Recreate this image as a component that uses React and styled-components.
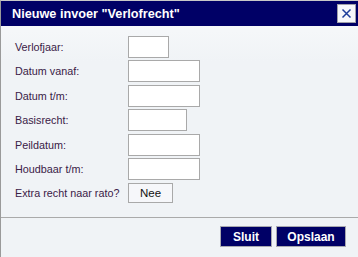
import React from "react";
import styled, { createGlobalStyle } from "styled-components";

const Global = createGlobalStyle`
  html, body {
    margin: 0;
    padding: 0;
    background: #f0f3f6;
  }
  * {
    box-sizing: border-box;
  }
`;

const Window = styled.div`
  width: 358px;
  height: 257px;
  display: flex;
  flex-direction: column;
  border-left: 1px solid #9a9a9a;
  border-top: 1px solid #c8c8c8;
  background: linear-gradient(#fafbfc 0px, #f0f3f6 60px, #f0f3f6 100%);
  font-family: "Liberation Sans", Arial, sans-serif;
  overflow: hidden;
`;

const TitleBar = styled.div`
  height: 25px;
  flex: none;
  background: #000066;
  display: flex;
  align-items: center;
  justify-content: space-between;
  padding: 0 2px 0 11px;
`;

const Title = styled.span`
  color: #ffffff;
  font-weight: bold;
  font-size: 12.7px;
`;

const CloseButton = styled.button`
  width: 19px;
  height: 19px;
  padding: 0;
  margin: 0;
  border: 1px solid #a0a0a8;
  background: #f6f7fb;
  display: flex;
  align-items: center;
  justify-content: center;
  cursor: pointer;
`;

const Body = styled.div`
  flex: 1;
  padding: 10px 0 0 14px;
  display: flex;
  flex-direction: column;
  gap: 2.4px;
`;

const Row = styled.div`
  display: flex;
  align-items: center;
  height: 22px;
`;

const Label = styled.label`
  width: 113px;
  flex: none;
  font-size: 10.8px;
  color: #3a2046;
`;

const Input = styled.input`
  width: ${(p) => p.$w}px;
  height: 22px;
  border: 1px solid #a9a9a9;
  background: #ffffff;
  margin: 0;
  padding: 0 3px;
  font-family: inherit;
  font-size: 11px;
  outline: none;
`;

const Toggle = styled.button`
  width: 45px;
  height: 20px;
  border: 1px solid #a9a9a9;
  background: #f6f7fa;
  color: #111111;
  font-family: inherit;
  font-size: 11.5px;
  padding: 0;
  margin: 0;
`;

const Footer = styled.div`
  flex: none;
  border-top: 1px solid #aaaaaa;
  height: 40px;
  display: flex;
  justify-content: flex-end;
  align-items: flex-start;
  padding: 8px 12px 0 0;
  gap: 4px;
`;

const Action = styled.button`
  width: ${(p) => p.$w}px;
  height: 21px;
  border: 1px solid #a8a8b0;
  background: #000066;
  color: #ffffff;
  font-family: inherit;
  font-weight: bold;
  font-size: 12px;
  padding: 0;
  margin: 0;
  cursor: pointer;
`;

const fields = [
  { label: "Verlofjaar:", w: 41 },
  { label: "Datum vanaf:", w: 72 },
  { label: "Datum t/m:", w: 72 },
  { label: "Basisrecht:", w: 59 },
  { label: "Peildatum:", w: 72 },
  { label: "Houdbaar t/m:", w: 72 },
];

export default function App() {
  return (
    <>
      <Global />
      <Window>
        <TitleBar>
          <Title>Nieuwe invoer "Verlofrecht"</Title>
          <CloseButton aria-label="Sluiten">
            <svg width="11" height="11" viewBox="0 0 11 11">
              <path
                d="M1.5 1.5 L9.5 9.5 M9.5 1.5 L1.5 9.5"
                stroke="#1b3c9a"
                strokeWidth="1.5"
                fill="none"
              />
            </svg>
          </CloseButton>
        </TitleBar>
        <Body>
          {fields.map((f) => (
            <Row key={f.label}>
              <Label>{f.label}</Label>
              <Input $w={f.w} />
            </Row>
          ))}
          <Row>
            <Label>Extra recht naar rato?</Label>
            <Toggle>Nee</Toggle>
          </Row>
        </Body>
        <Footer>
          <Action $w={52}>Sluit</Action>
          <Action $w={70}>Opslaan</Action>
        </Footer>
      </Window>
    </>
  );
}
